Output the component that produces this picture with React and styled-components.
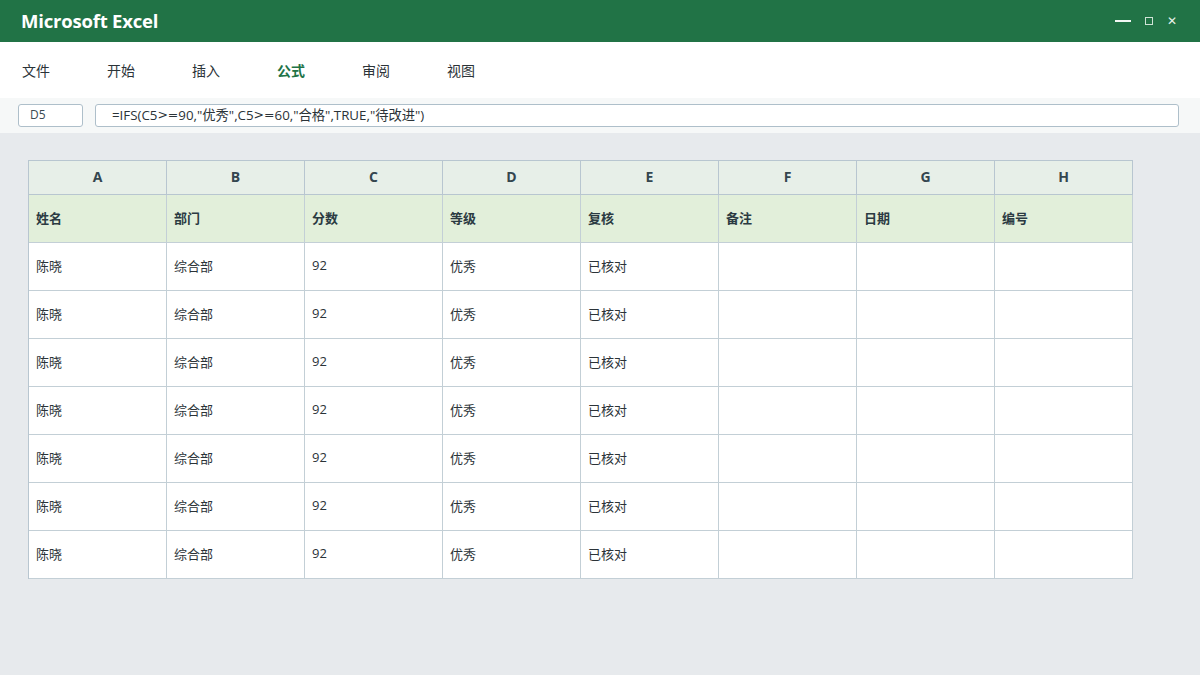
import React from "react";
import styled, { createGlobalStyle } from "styled-components";

const Global = createGlobalStyle`
  html, body { margin: 0; padding: 0; }
  body {
    width: 1200px;
    height: 675px;
    overflow: hidden;
    background: #e7eaed;
    font-family: "Open Sans", "Noto Sans CJK SC", sans-serif;
    color: #2b3a42;
  }
  * { box-sizing: border-box; }
`;

const Page = styled.div`
  width: 1200px;
  height: 675px;
  display: flex;
  flex-direction: column;
  background: #e7eaed;
`;

const TitleBar = styled.div`
  height: 42px;
  flex: none;
  background: #217346;
  display: flex;
  align-items: center;
  justify-content: space-between;
  padding: 0 23px 0 21px;
`;

const Title = styled.div`
  color: #ffffff;
  font-size: 18.5px;
  font-weight: 700;
  letter-spacing: -0.2px;
  margin-top: -1px;
`;

const WinControls = styled.div`
  display: flex;
  align-items: center;
  gap: 14px;
`;

const WinBtn = styled.span`
  font-family: "DejaVu Sans", sans-serif;
  font-size: 12px;
  line-height: 1;
  color: #e8f2ec;
`;

const MinLine = styled.span`
  display: block;
  width: 16px;
  height: 1.5px;
  background: #f2f7f4;
`;

const MaxBox = styled.span`
  display: block;
  width: 8px;
  height: 8px;
  border: 1px solid #cfe3d6;
`;

const Ribbon = styled.div`
  height: 56px;
  flex: none;
  background: #ffffff;
  display: flex;
  align-items: center;
  padding-left: 22px;
  gap: 57px;
`;

const Tab = styled.div`
  font-size: 14px;
  color: ${(p) => (p.$active ? "#217346" : "#2b3338")};
  font-weight: ${(p) => (p.$active ? 700 : 400)};
`;

const FormulaBar = styled.div`
  height: 35px;
  flex: none;
  background: #f6f8f8;
  display: flex;
  align-items: center;
  padding: 0 21px 1px 18px;
  gap: 12px;
`;

const NameBox = styled.div`
  width: 65px;
  height: 23px;
  border: 1px solid #aebfca;
  border-radius: 3px;
  background: #ffffff;
  font-size: 12px;
  color: #3b4a52;
  display: flex;
  align-items: center;
  padding: 0 0 1px 11px;
`;

const FormulaInput = styled.div`
  flex: 1;
  height: 23px;
  border: 1px solid #aebfca;
  border-radius: 3px;
  background: #ffffff;
  font-size: 13.3px;
  color: #2b3338;
  display: flex;
  align-items: center;
  padding: 0 0 1px 16px;
  white-space: pre;
`;

const Op = styled.span`
  font-family: "DejaVu Sans", sans-serif;
  font-size: 12.5px;
`;

const Sheet = styled.div`
  flex: 1;
  padding: 27px 0 0 28px;
`;

const Grid = styled.div`
  display: grid;
  grid-template-columns: repeat(8, 138px);
  grid-template-rows: 34px;
  grid-auto-rows: 48px;
  width: 1105px;
  border-left: 1px solid #b8c6d0;
  border-top: 1px solid #b8c6d0;
`;

const ColHead = styled.div`
  background: #e7efe8;
  border-right: 1px solid #b8c6d0;
  border-bottom: 1px solid #b8c6d0;
  display: flex;
  align-items: center;
  justify-content: center;
  font-size: 14px;
  font-weight: 700;
  color: #34464f;
  padding-bottom: 2px;
`;

const HeadCell = styled.div`
  background: #e2efda;
  border-right: 1px solid #c3cfd6;
  border-bottom: 1px solid #c3cfd6;
  display: flex;
  align-items: center;
  padding-left: 7px;
  padding-bottom: 2px;
  font-size: 13px;
  font-weight: 700;
  color: #2b3a42;
`;

const Cell = styled.div`
  background: #ffffff;
  border-right: 1px solid #c3cfd6;
  border-bottom: 1px solid #c3cfd6;
  display: flex;
  align-items: center;
  padding-left: 7px;
  padding-bottom: 3px;
  font-size: 13px;
  color: #2b3338;
`;

const cols = ["A", "B", "C", "D", "E", "F", "G", "H"];
const heads = ["姓名", "部门", "分数", "等级", "复核", "备注", "日期", "编号"];
const row = ["陈晓", "综合部", "92", "优秀", "已核对", "", "", ""];
const tabs = ["文件", "开始", "插入", "公式", "审阅", "视图"];

export default function App() {
  return (
    <Page>
      <Global />
      <TitleBar>
        <Title>Microsoft Excel</Title>
        <WinControls>
          <MinLine />
          <MaxBox />
          <WinBtn>✕</WinBtn>
        </WinControls>
      </TitleBar>
      <Ribbon>
        {tabs.map((t) => (
          <Tab key={t} $active={t === "公式"}>
            {t}
          </Tab>
        ))}
      </Ribbon>
      <FormulaBar>
        <NameBox>D5</NameBox>
        <FormulaInput>
          =IFS(C5<Op>&gt;=</Op>90,"优秀",C5<Op>&gt;=</Op>60,"合格",TRUE,"待改进")
        </FormulaInput>
      </FormulaBar>
      <Sheet>
        <Grid>
          {cols.map((c) => (
            <ColHead key={c}>{c}</ColHead>
          ))}
          {heads.map((h) => (
            <HeadCell key={h}>{h}</HeadCell>
          ))}
          {Array.from({ length: 7 }).map((_, r) =>
            row.map((v, i) => <Cell key={`${r}-${i}`}>{v}</Cell>)
          )}
        </Grid>
      </Sheet>
    </Page>
  );
}
